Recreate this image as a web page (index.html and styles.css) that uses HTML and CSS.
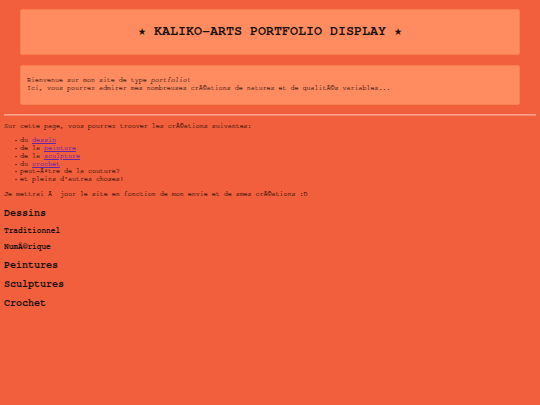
FILE: index.html
```html
<!DOCTYPE html>
<html lang="fr">
<head>
<meta charset="utf-8">
<title>Kaliko-Arts Portfolio Display</title>
<link rel="stylesheet" href="styles.css">
</head>
<body>
<header class="top">
  <div class="box title-box">
    <h1 class="title">★ KALIKO-ARTS PORTFOLIO DISPLAY ★</h1>
  </div>
  <div class="box intro-box">
    <p class="intro">Bienvenue sur mon site de type <em>portfolio</em>!<br>Ici, vous pourrez admirer mes nombreuses crÃ©ations de natures et de qualitÃ©s variables...</p>
  </div>
</header>
<hr class="rule">
<main>
  <p class="text">Sur cette page, vous pourrez trouver les crÃ©ations suivantes:</p>
  <ul class="list">
    <li>du <a href="#dessins">dessin</a></li>
    <li>de la <a href="#peintures">peinture</a></li>
    <li>de la <a href="#sculptures">sculpture</a></li>
    <li>du <a href="#crochet">crochet</a></li>
    <li>peut-Ãªtre de la couture?</li>
    <li>et pleins d'autres choses!</li>
  </ul>
  <p class="text">Je mettrai Ã&nbsp; jour le site en fonction de mon envie et de smes crÃ©ations :D</p>
  <h2 class="h2" id="dessins">Dessins</h2>
  <h3 class="h3">Traditionnel</h3>
  <h3 class="h3">NumÃ©rique</h3>
  <h2 class="h2" id="peintures">Peintures</h2>
  <h2 class="h2" id="sculptures">Sculptures</h2>
  <h2 class="h2" id="crochet">Crochet</h2>
</main>
</body>
</html>
```
FILE: styles.css
```css
html, body {
  background: #f25f3c;
}
body {
  margin: 4px;
  font-family: "Nimbus Mono PS", "Nimbus Mono L", "FreeMono", "Courier", "Courier New", "Liberation Mono", monospace;
  font-size: 6.67px;
  color: #1e0c06;
}
.top {
  display: flex;
  flex-direction: column;
  gap: 10px;
  margin: 5px 16px 0 16px;
}
.box {
  background: #ff8c60;
  border: 1px solid #f9814f;
  border-radius: 2px;
}
.title-box {
  height: 44px;
  display: flex;
  align-items: center;
  justify-content: center;
}
.title {
  margin: 0;
  font-size: 13.33px;
  font-weight: bold;
  color: #1a1010;
  line-height: 1;
}
.intro-box {
  height: 38px;
  display: flex;
  align-items: center;
  padding: 0 6px;
}
.intro {
  margin: 0;
  color: #4a2214;
  line-height: 7.8px;
  -webkit-text-stroke: 0.15px currentColor;
}
.rule {
  border: 0;
  border-top: 1px solid #f8a48c;
  border-bottom: 1px solid #f48a6c;
  margin: 9px 0 0 0;
  height: 0;
}
.text {
  margin: 6.67px 0;
  line-height: 7.8px;
  color: #3a160a;
  -webkit-text-stroke: 0.15px currentColor;
}
.list {
  margin: 6px 0 4px 0;
  padding-left: 16px;
  line-height: 7.8px;
  color: #3a160a;
  list-style: disc;
  -webkit-text-stroke: 0.15px currentColor;
}
.list li::marker {
  content: "•\00a0";
  font-size: 4.5px;
}
.list a {
  color: #6a24a8;
}
.h2 {
  font-size: 10px;
  font-weight: bold;
  margin: 9.2px 0;
  color: #1a1010;
}
.h3 {
  font-size: 7.8px;
  font-weight: bold;
  margin: 7.8px 0;
  color: #1a1010;
}
```
